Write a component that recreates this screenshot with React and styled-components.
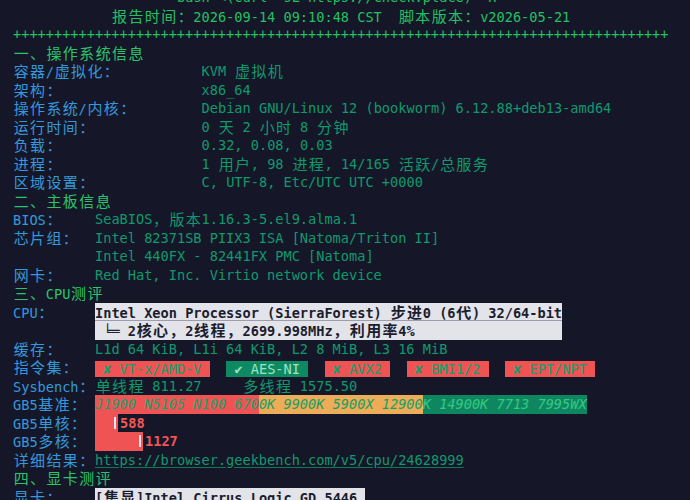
import styled, { createGlobalStyle } from "styled-components";

// one terminal cell, DejaVu Sans Mono at 13.62px
const CELL = 8.2;
const cells = (n) => `${(n * CELL).toFixed(2)}px`;

const GlobalStyle = createGlobalStyle`
  html, body {
    margin: 0;
    background: #151728;
    overflow: hidden;
  }
`;

const Terminal = styled.div`
  height: 500px;
  overflow: hidden;
  padding: 0 13px;
  font-family: "DejaVu Sans Mono", "Noto Sans CJK SC", monospace;
  font-size: 13.62px;
  line-height: 18.5px;
  color: #11996e;
`;

const Screen = styled.div`
  margin-top: -12px;
`;

const Line = styled.div`
  height: 18.5px;
  white-space: pre;
  padding-left: ${(p) => cells(p.$indent || 0)};
  color: ${(p) => p.$color || "inherit"};
`;

const Title = styled(Line)`
  color: #2ac46c;
`;

const Row = styled.div`
  display: flex;
  align-items: flex-start;
  min-height: 18.5px;
  white-space: pre;
`;

const Label = styled.span`
  flex: none;
  width: ${(p) => cells(p.$cells)};
  height: 18.5px;
  color: #3598dc;
`;

const Value = styled.span`
  display: flex;
  align-items: ${(p) => p.$align || "flex-start"};
  gap: ${(p) => cells(p.$gap || 0)};
  height: ${(p) => (p.$tall ? "auto" : "18.5px")};
  color: ${(p) => p.$color || "#11996e"};
`;

const Wide = styled.span`
  display: inline-block;
  width: ${cells(2)};
  font-family: "Noto Sans CJK SC", sans-serif;
  font-size: 15px;
  line-height: 18.5px;
  text-align: center;
`;

const Box = styled.div`
  display: inline-block;
  background: #e3e3ea;
  color: #1b1d2e;
  font-weight: bold;
`;

const BoxLine = styled.div`
  height: 18.5px;
  white-space: pre;

  &:first-child:not(:last-child) {
    box-shadow: inset 0 -1px #9d9dab;
  }
`;

const Badge = styled.span`
  flex: none;
  width: ${(p) => cells(p.$cells)};
  height: 16px;
  margin-top: 3px;
  line-height: 16px;
  white-space: pre;
  background: ${(p) => (p.$ok ? "#0e8a63" : "#f05353")};
  color: ${(p) => (p.$ok ? "#9fe2c1" : "#11a06e")};
`;

const BenchSeg = styled.span`
  font-style: italic;
  background: ${(p) => p.$bg};
  color: ${(p) => p.$fg};
`;

const Fill = styled.span`
  display: flex;
  align-items: center;
  height: 18.5px;
  padding-left: ${(p) => p.$width}px;
  padding-right: 2px;
  background: #f05353;
`;

const Tick = styled.span`
  width: 2px;
  height: 12px;
  background: #e6e6ee;
`;

const Score = styled.span`
  margin-left: 2px;
  font-weight: bold;
  color: #f25656;
`;

const Link = styled.span`
  text-decoration: underline;
  text-decoration-color: #0d7a57;
  text-underline-offset: 2px;
`;

const WIDE = /([\u2e80-\u9fff\u3000-\u303f\uff00-\uffef])/;

const T = ({ children }) =>
  String(children)
    .split(WIDE)
    .map((part, i) => (i % 2 ? <Wide key={i}>{part}</Wide> : part));

const osInfo = [
  ["容器/虚拟化：", "KVM 虚拟机"],
  ["架构：", "x86_64"],
  ["操作系统/内核：", "Debian GNU/Linux 12 (bookworm) 6.12.88+deb13-amd64"],
  ["运行时间：", "0 天 2 小时 8 分钟"],
  ["负载：", "0.32, 0.08, 0.03"],
  ["进程：", "1 用户, 98 进程, 14/165 活跃/总服务"],
  ["区域设置：", "C, UTF-8, Etc/UTC UTC +0000"],
];

const boardInfo = [
  ["BIOS：", "SeaBIOS，版本1.16.3-5.el9.alma.1"],
  ["芯片组：", "Intel 82371SB PIIX3 ISA [Natoma/Triton II]"],
  ["", "Intel 440FX - 82441FX PMC [Natoma]"],
  ["网卡：", "Red Hat, Inc. Virtio network device"],
];

const flags = [
  { text: " ✘ VT-x/AMD-V ", cells: 14 },
  { text: " ✔ AES-NI ", cells: 10, ok: true },
  { text: " ✘ AVX2 ", cells: 8 },
  { text: " ✘ BMI1/2 ", cells: 10 },
  { text: " ✘ EPT/NPT ", cells: 11 },
];

const bench = [
  { text: "J1900 N5105 N100 670", bg: "#f05353", fg: "#17a36c" },
  { text: "0K 9900K 5900X 12900", bg: "#efac58", fg: "#14a066" },
  { text: "K 14900K 7713 7995WX", bg: "#0e8760", fg: "#33c983" },
];

const InfoRow = ({ label, value, width }) => (
  <Row>
    <Label $cells={width}>
      <T>{label}</T>
    </Label>
    <Value>
      <T>{value}</T>
    </Value>
  </Row>
);

export default function App() {
  return (
    <>
      <GlobalStyle />
      <Terminal>
        <Screen>
          <Line $indent={20} $color="#22c163">
            bash &lt;(curl -sL https://check.place) -H
          </Line>
          <Line $indent={12} $color="#22c163">
            <T>报告时间：2026-09-14 09:10:48 CST  脚本版本：v2026-05-21</T>
          </Line>
          <Line $color="#22c163">{"+".repeat(80)}</Line>

          <Title>
            <T>一、操作系统信息</T>
          </Title>
          {osInfo.map(([label, value]) => (
            <InfoRow key={label} label={label} value={value} width={23} />
          ))}

          <Title>
            <T>二、主板信息</T>
          </Title>
          {boardInfo.map(([label, value]) => (
            <InfoRow key={value} label={label} value={value} width={10} />
          ))}

          <Title>
            <T>三、CPU测评</T>
          </Title>
          <Row>
            <Label $cells={10}>
              <T>CPU：</T>
            </Label>
            <Value $tall>
              <Box>
                <BoxLine>
                  <T>Intel Xeon Processor (SierraForest) 步进0 (6代) 32/64-bit</T>
                </BoxLine>
                <BoxLine>
                  <T> ╘═ 2核心，2线程，2699.998MHz，利用率4%</T>
                </BoxLine>
              </Box>
            </Value>
          </Row>
          <InfoRow label="缓存：" value="L1d 64 KiB, L1i 64 KiB, L2 8 MiB, L3 16 MiB" width={10} />
          <Row>
            <Label $cells={10}>
              <T>指令集：</T>
            </Label>
            <Value $gap={2}>
              {flags.map((f) => (
                <Badge key={f.text} $cells={f.cells} $ok={f.ok}>
                  {f.text}
                </Badge>
              ))}
            </Value>
          </Row>
          <InfoRow label="Sysbench：" value="单线程 811.27     多线程 1575.50" width={10} />
          <Row>
            <Label $cells={10}>
              <T>GB5基准：</T>
            </Label>
            <Value>
              {bench.map((b) => (
                <BenchSeg key={b.text} $bg={b.bg} $fg={b.fg}>
                  {b.text}
                </BenchSeg>
              ))}
            </Value>
          </Row>
          <Row>
            <Label $cells={10}>
              <T>GB5单核：</T>
            </Label>
            <Value $align="center">
              <Fill $width={19}>
                <Tick />
              </Fill>
              <Score>588</Score>
            </Value>
          </Row>
          <Row>
            <Label $cells={10}>
              <T>GB5多核：</T>
            </Label>
            <Value $align="center">
              <Fill $width={44}>
                <Tick />
              </Fill>
              <Score>1127</Score>
            </Value>
          </Row>
          <Row>
            <Label $cells={10}>
              <T>详细结果：</T>
            </Label>
            <Value>
              <Link>https://browser.geekbench.com/v5/cpu/24628999</Link>
            </Value>
          </Row>

          <Title>
            <T>四、显卡测评</T>
          </Title>
          <Row>
            <Label $cells={10}>
              <T>显卡：</T>
            </Label>
            <Value $tall>
              <Box>
                <BoxLine>
                  <T>[集显]Intel Cirrus Logic GD 5446 </T>
                </BoxLine>
              </Box>
            </Value>
          </Row>
        </Screen>
      </Terminal>
    </>
  );
}
